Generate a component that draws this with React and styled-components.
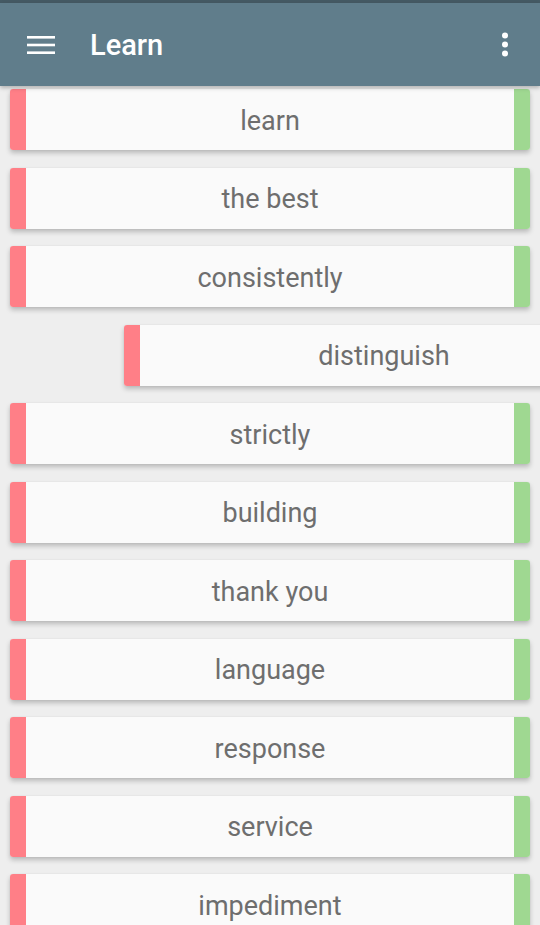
import React from "react";
import styled, { createGlobalStyle } from "styled-components";

const Global = createGlobalStyle`
  html, body { margin: 0; padding: 0; background: #eeeeee; }
  body { font-family: Roboto, "Noto Sans", sans-serif; overflow: hidden; }
`;

const Screen = styled.div`
  width: 540px;
  height: 925px;
  overflow: hidden;
  background: #eeeeee;
  display: flex;
  flex-direction: column;
`;

const StatusBar = styled.div`
  height: 3px;
  background: #455a64;
  flex: none;
`;

const Toolbar = styled.header`
  height: 83px;
  flex: none;
  background: #607d8b;
  display: flex;
  align-items: center;
  padding: 0 20px 0 26px;
  box-shadow: 0 2px 4px rgba(0, 0, 0, 0.25);
  position: relative;
  z-index: 2;
`;

const IconButton = styled.div`
  width: 30px;
  height: 30px;
  display: flex;
  align-items: center;
  justify-content: center;
`;

const Title = styled.h1`
  margin: 0 0 0 34px;
  font-size: 29px;
  font-weight: 500;
  color: #ffffff;
  flex: 1;
`;

const List = styled.div`
  display: flex;
  flex-direction: column;
  gap: 17.5px;
  padding: 3px 10px 0 10px;
`;

const Card = styled.div`
  height: 61px;
  display: flex;
  background: #fafafa;
  border-radius: 3px;
  overflow: hidden;
  box-shadow: 0 3px 5px rgba(0, 0, 0, 0.22), 0 0 1px rgba(0, 0, 0, 0.12);
  transform: translateX(${(p) => p.$shift || 0}px);
  flex: none;
`;

const Strip = styled.div`
  width: 16px;
  flex: none;
  background: ${(p) => p.$color};
`;

const Word = styled.div`
  flex: 1;
  display: flex;
  align-items: center;
  justify-content: center;
  font-size: 27px;
  color: #6e6e6e;
  padding-top: 2px;
`;

const words = [
  ["learn"],
  ["the best"],
  ["consistently"],
  ["distinguish", 114],
  ["strictly"],
  ["building"],
  ["thank you"],
  ["language"],
  ["response"],
  ["service"],
  ["impediment"],
];

export default function App() {
  return (
    <Screen>
      <Global />
      <StatusBar />
      <Toolbar>
        <IconButton>
          <svg width="28" height="20" viewBox="0 0 28 20">
            <rect x="0" y="1" width="28" height="2.6" fill="#fff" />
            <rect x="0" y="8.7" width="28" height="2.6" fill="#fff" />
            <rect x="0" y="16.4" width="28" height="2.6" fill="#fff" />
          </svg>
        </IconButton>
        <Title>Learn</Title>
        <IconButton>
          <svg width="8" height="26" viewBox="0 0 8 26">
            <circle cx="4" cy="3.5" r="3" fill="#fff" />
            <circle cx="4" cy="12.5" r="3" fill="#fff" />
            <circle cx="4" cy="21.5" r="3" fill="#fff" />
          </svg>
        </IconButton>
      </Toolbar>
      <List>
        {words.map(([w, shift]) => (
          <Card key={w} $shift={shift}>
            <Strip $color="#ff7f87" />
            <Word>{w}</Word>
            <Strip $color="#9fd891" />
          </Card>
        ))}
      </List>
    </Screen>
  );
}
